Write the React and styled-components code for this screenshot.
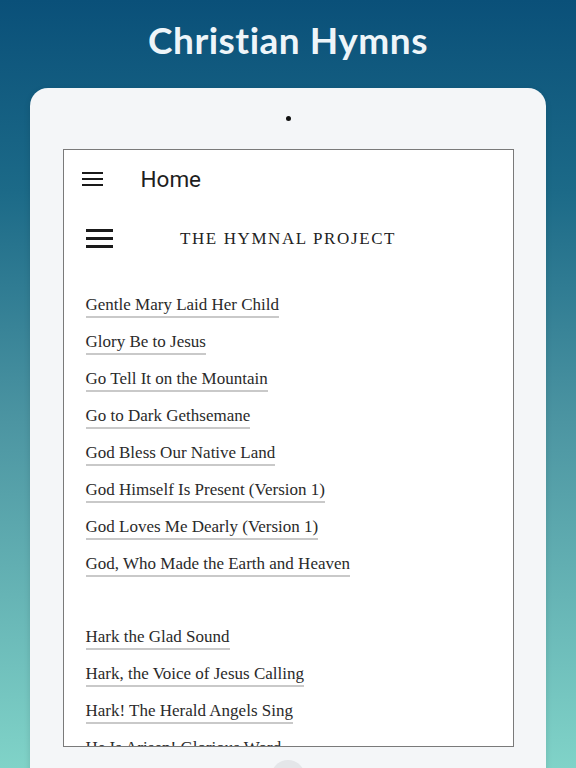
import React from "react";
import styled, { createGlobalStyle } from "styled-components";

const GlobalStyle = createGlobalStyle`
  html, body {
    margin: 0;
    padding: 0;
    height: 100%;
    overflow: hidden;
  }
  #root {
    height: 100%;
  }
`;

const Page = styled.div`
  height: 768px;
  overflow: hidden;
  background: linear-gradient(180deg, #0a5079 0%, #1c6a88 25%, #4c95a2 55%, #80d3c8 100%);
  display: flex;
  flex-direction: column;
  align-items: center;
`;

const Headline = styled.h1`
  margin: 17px 0 0;
  height: 46px;
  font-family: Lato, "Open Sans", sans-serif;
  font-weight: 700;
  font-size: 37px;
  line-height: 46px;
  color: #eef5f9;
  letter-spacing: 0.5px;
`;

const Device = styled.div`
  margin-top: 25px;
  width: 516px;
  height: 720px;
  flex-shrink: 0;
  background: #f4f6f8;
  border-radius: 18px;
  box-shadow: 0 2px 6px rgba(0, 0, 0, 0.12);
  display: flex;
  flex-direction: column;
  align-items: center;
`;

const Camera = styled.div`
  margin-top: 28px;
  width: 5px;
  height: 5px;
  border-radius: 50%;
  background: #111;
`;

const Screen = styled.div`
  margin-top: 28px;
  width: 449px;
  height: 596px;
  flex-shrink: 0;
  border: 1px solid #7a7a7a;
  background: #fff;
  overflow: hidden;
  display: flex;
  flex-direction: column;
  & > * {
    flex-shrink: 0;
  }
`;

const HomeButton = styled.div`
  margin-top: 13px;
  width: 34px;
  height: 34px;
  border-radius: 50%;
  background: #e4e6e9;
`;

const AppBar = styled.div`
  height: 58px;
  display: flex;
  align-items: center;
  padding: 0 0 0 18px;
  gap: 38px;
`;

const Burger = styled.div`
  width: ${(p) => p.$w}px;
  display: flex;
  flex-direction: column;
  gap: ${(p) => p.$gap}px;
  span {
    display: block;
    height: ${(p) => p.$t}px;
    background: #1a1a1a;
  }
`;

const AppTitle = styled.div`
  font-family: Roboto, "Noto Sans", sans-serif;
  font-size: 22.5px;
  color: #1e1e1e;
`;

const SiteHeader = styled.div`
  position: relative;
  height: 44px;
  display: flex;
  align-items: center;
  justify-content: center;
  margin-top: 9px;
`;

const SiteBurger = styled(Burger)`
  position: absolute;
  left: 22px;
  top: 12px;
`;

const SiteTitle = styled.div`
  font-family: "Liberation Serif", serif;
  font-size: 17px;
  letter-spacing: 1.6px;
  color: #222;
`;

const List = styled.div`
  padding: 33px 0 0 22px;
  display: flex;
  flex-direction: column;
`;

const Group = styled.div`
  display: flex;
  flex-direction: column;
  margin-bottom: 36px;
`;

const Item = styled.div`
  height: 37px;
`;

const Link = styled.a`
  display: inline-block;
  font-family: "Liberation Serif", serif;
  font-size: 17px;
  line-height: 22px;
  color: #2a2a2a;
  text-decoration: none;
  border-bottom: 2px solid #c9c9c9;
`;

const groups = [
  [
    "Gentle Mary Laid Her Child",
    "Glory Be to Jesus",
    "Go Tell It on the Mountain",
    "Go to Dark Gethsemane",
    "God Bless Our Native Land",
    "God Himself Is Present (Version 1)",
    "God Loves Me Dearly (Version 1)",
    "God, Who Made the Earth and Heaven",
  ],
  [
    "Hark the Glad Sound",
    "Hark, the Voice of Jesus Calling",
    "Hark! The Herald Angels Sing",
    "He Is Arisen! Glorious Word",
  ],
];

function Lines({ w, t, gap }) {
  return (
    <Burger $w={w} $t={t} $gap={gap}>
      <span />
      <span />
      <span />
    </Burger>
  );
}

export default function App() {
  return (
    <Page>
      <GlobalStyle />
      <Headline>Christian Hymns</Headline>
      <Device>
        <Camera />
        <Screen>
          <AppBar>
            <Lines w={21} t={2} gap={4} />
            <AppTitle>Home</AppTitle>
          </AppBar>
          <SiteHeader>
            <SiteBurger $w={27} $t={3} $gap={5}>
              <span />
              <span />
              <span />
            </SiteBurger>
            <SiteTitle>THE HYMNAL PROJECT</SiteTitle>
          </SiteHeader>
          <List>
            {groups.map((g, i) => (
              <Group key={i}>
                {g.map((title) => (
                  <Item key={title}>
                    <Link href="#">{title}</Link>
                  </Item>
                ))}
              </Group>
            ))}
          </List>
        </Screen>
        <HomeButton />
      </Device>
    </Page>
  );
}
